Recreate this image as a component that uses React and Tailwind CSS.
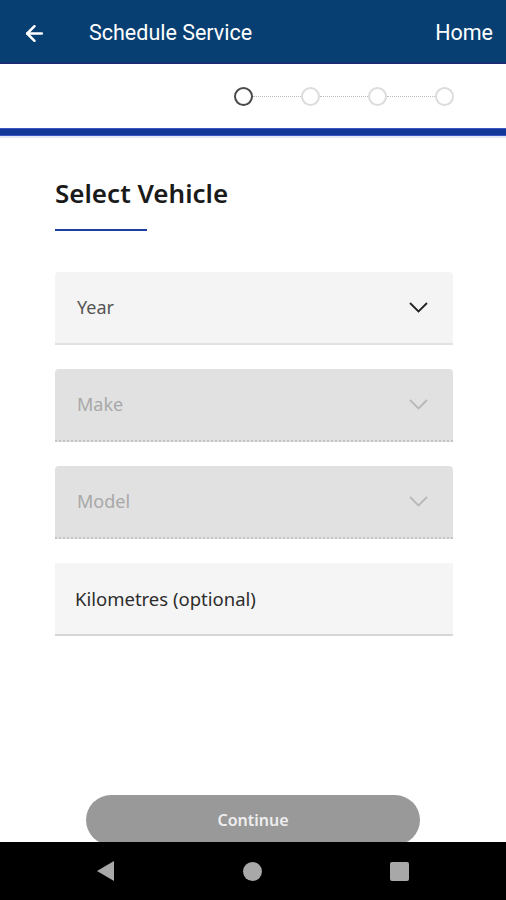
import { ArrowLeft } from "lucide-react";

const Step = ({ active }) => (
  <div
    className={`h-[19px] w-[19px] rounded-full border-2 ${
      active ? "border-[#4a4a4a]" : "border-[#dcdcdc]"
    }`}
  />
);

const Connector = () => (
  <div className="h-0 w-[48px] border-t border-dotted border-[#bdbdbd]" />
);

const Chevron = ({ color }) => (
  <svg width="19" height="11" viewBox="0 0 19 11" fill="none">
    <path d="M1 1 L9.5 9.5 L18 1" stroke={color} strokeWidth="1.8" />
  </svg>
);

const SelectField = ({ label, disabled }) => (
  <div
    className={`flex h-[73px] items-center justify-between rounded-t-[4px] pl-[22px] pr-[25px] ${
      disabled
        ? "border-b-2 border-dotted border-[#c4c4c4] bg-[#e1e1e1]"
        : "border-b-2 border-[#e2e2e2] bg-[#f4f4f4]"
    }`}
  >
    <span
      className={`text-[18px] ${disabled ? "text-[#a8a8a8]" : "text-[#555555]"}`}
    >
      {label}
    </span>
    <Chevron color={disabled ? "#b8b8b8" : "#222222"} />
  </div>
);

export default function App() {
  return (
    <div
      className="relative flex h-[900px] w-full flex-col overflow-hidden bg-white"
      style={{ fontFamily: "'Noto Sans', 'Open Sans', sans-serif" }}
    >
      <header
        className="flex h-[64px] shrink-0 items-center border-b-2 border-[#1a2d73] bg-[#073f72] pl-[22px] pr-[13px] pt-[4px] text-white"
        style={{ fontFamily: "Roboto, 'Liberation Sans', sans-serif" }}
      >
        <ArrowLeft size={25} strokeWidth={2.4} />
        <span className="ml-[42px] text-[21.5px]">Schedule Service</span>
        <span className="ml-auto text-[21.5px]">Home</span>
      </header>

      <div className="flex h-[64px] shrink-0 items-center justify-end pr-[52px]">
        <Step active />
        <Connector />
        <Step />
        <Connector />
        <Step />
        <Connector />
        <Step />
      </div>

      <div className="h-[8px] shrink-0 border-y border-[#3c55c4] bg-[#13389a]" />
      <div className="h-[2px] shrink-0 bg-[#e3e8f6]" />

      <main className="flex flex-col pl-[55px] pr-[53px] pt-[38px]">
        <h1 className="text-[26px] font-semibold leading-[34px] text-[#1a1a1a]">
          Select Vehicle
        </h1>
        <div className="mt-[19px] h-[2px] w-[92px] bg-[#1c3fa3]" />

        <div className="mt-[41px] flex flex-col gap-[24px]">
          <SelectField label="Year" />
          <SelectField label="Make" disabled />
          <SelectField label="Model" disabled />
          <div className="flex h-[73px] items-center border-b-2 border-[#d6d6d6] bg-[#f5f5f5] px-[20px]">
            <span className="text-[18.5px] text-[#2d2d2d]">Kilometres (optional)</span>
          </div>
        </div>
      </main>

      <div className="mt-auto flex justify-center pb-[55px]">
        <button className="flex h-[50px] w-[334px] items-center justify-center rounded-full bg-[#999999] text-[16px] font-semibold text-[#eeeeee]">
          Continue
        </button>
      </div>

      <nav className="absolute bottom-0 left-0 flex h-[58px] w-full items-center justify-between bg-black px-[97px]">
        <svg width="17" height="20" viewBox="0 0 17 20">
          <path d="M17 0 L17 20 L0 10 Z" fill="#a8a8a8" />
        </svg>
        <div className="h-[19px] w-[19px] rounded-full bg-[#a8a8a8]" />
        <div className="h-[19px] w-[19px] rounded-[2px] bg-[#a8a8a8]" />
      </nav>
    </div>
  );
}
